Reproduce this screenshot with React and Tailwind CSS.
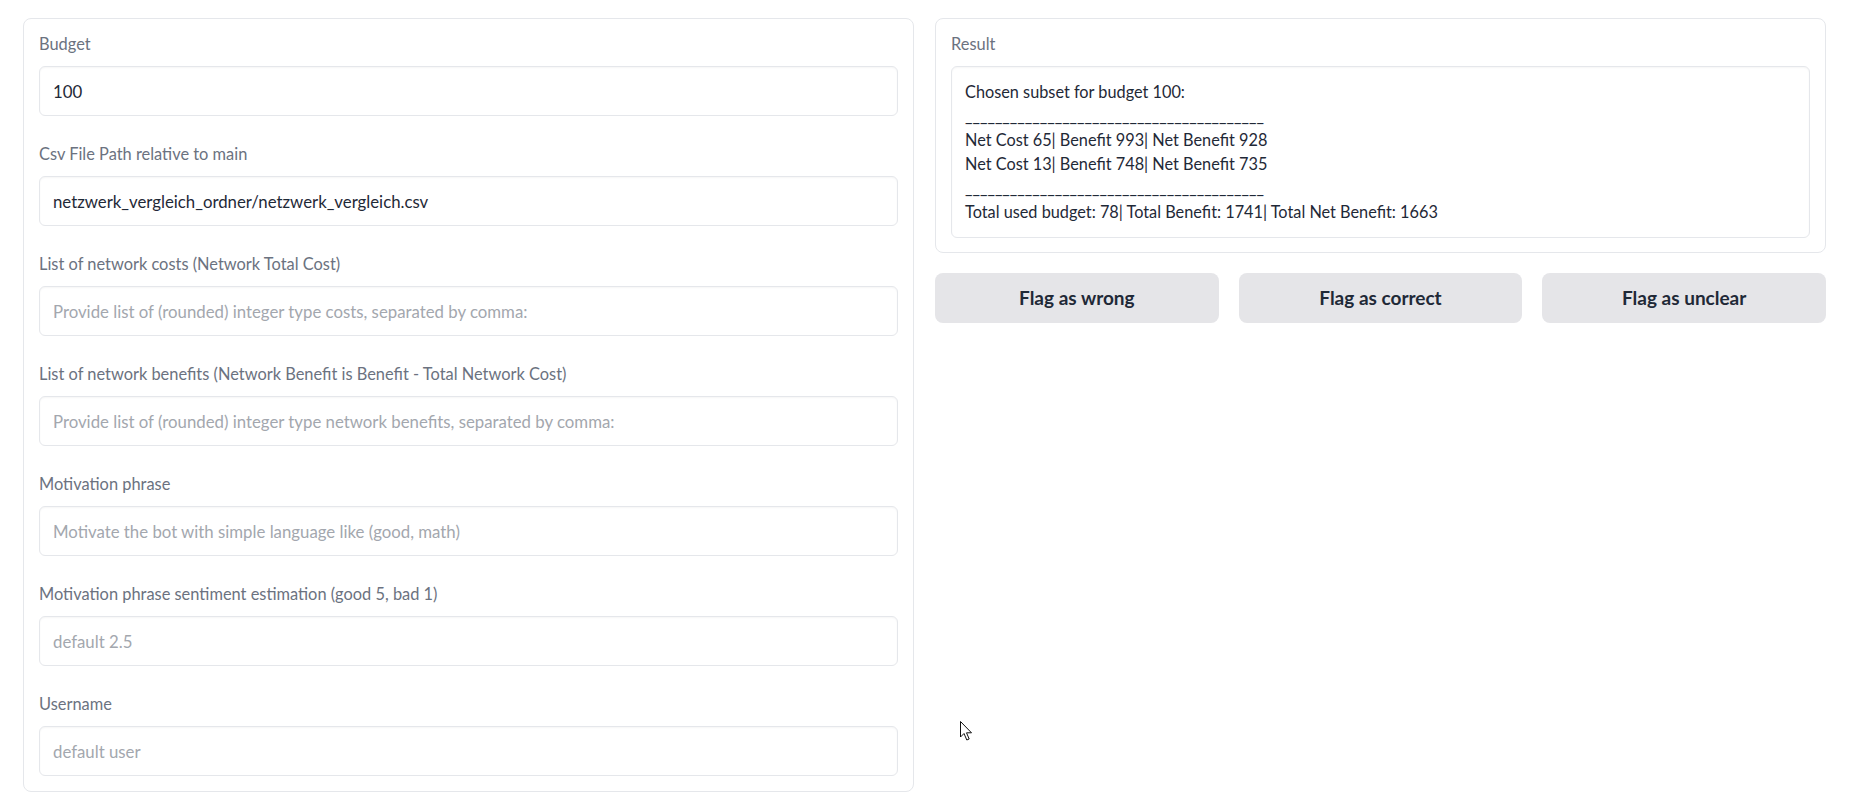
import React from 'react';

const fields = [
  { label: 'Budget', value: '100' },
  { label: 'Csv File Path relative to main', value: 'netzwerk_vergleich_ordner/netzwerk_vergleich.csv' },
  { label: 'List of network costs (Network Total Cost)', placeholder: 'Provide list of (rounded) integer type costs, separated by comma:' },
  { label: 'List of network benefits (Network Benefit is Benefit - Total Network Cost)', placeholder: 'Provide list of (rounded) integer type network benefits, separated by comma:' },
  { label: 'Motivation phrase', placeholder: 'Motivate the bot with simple language like (good, math)' },
  { label: 'Motivation phrase sentiment estimation (good 5, bad 1)', placeholder: 'default 2.5' },
  { label: 'Username', placeholder: 'default user' },
];

const line = '_'.repeat(40);

const resultLines = [
  'Chosen subset for budget 100:',
  line,
  'Net Cost 65| Benefit 993| Net Benefit 928',
  'Net Cost 13| Benefit 748| Net Benefit 735',
  line,
  'Total used budget: 78| Total Benefit: 1741| Total Net Benefit: 1663',
];

const Field = ({ label, value, placeholder }) => (
  <div className="flex flex-col gap-[10px]">
    <label className="text-[16.4px] leading-6 text-[#6b7280]">{label}</label>
    <input
      readOnly
      defaultValue={value}
      placeholder={placeholder}
      className="h-[50px] w-full px-[13px] border border-[#e5e7eb] rounded-md shadow-[inset_0_1px_2px_rgba(0,0,0,0.04)] text-[16.8px] text-[#1f2937] placeholder:text-[#a3a7ae] outline-none bg-white"
    />
  </div>
);

const Cursor = () => (
  <svg className="absolute left-[960px] top-[721px]" width="14" height="21" viewBox="0 0 14 21">
    <path d="M0.5 0.5 L0.5 16 L4 12.5 L6.8 19 L9.2 18 L6.5 11.8 L11.5 11.8 Z" fill="#fff" stroke="#111" strokeWidth="1" strokeLinejoin="round" />
  </svg>
);

const App = () => {
  return (
    <div className="relative min-h-screen bg-white flex items-start gap-[21px] pl-[23px] pr-[38px] pt-[18px] font-['Lato',sans-serif]">
      <div className="w-[891px] shrink-0 border border-[#e5e7eb] rounded-lg px-[15px] pt-[13px] pb-[15px] flex flex-col gap-[26px]">
        {fields.map(f => <Field key={f.label} {...f} />)}
      </div>

      <div className="w-[891px] shrink-0 flex flex-col gap-[20px]">
        <div className="border border-[#e5e7eb] rounded-lg px-[15px] pt-[13px] pb-[14px] flex flex-col gap-[10px]">
          <span className="text-[16.4px] leading-6 text-[#6b7280]">Result</span>
          <div className="border border-[#e5e7eb] rounded-md px-[13px] py-[13px] text-[16.3px] leading-6 text-[#1f2937] shadow-[inset_0_1px_2px_rgba(0,0,0,0.04)]">
            {resultLines.map((l, i) => <div key={i} className="whitespace-pre">{l}</div>)}
          </div>
        </div>
        <div className="grid grid-cols-3 gap-[20px]">
          {['Flag as wrong', 'Flag as correct', 'Flag as unclear'].map(t => (
            <button key={t} className="h-[50px] rounded-lg bg-[#e5e5e8] text-[19px] font-bold text-[#1f2937]">{t}</button>
          ))}
        </div>
      </div>
      <Cursor />
    </div>
  );
};

export default App;
